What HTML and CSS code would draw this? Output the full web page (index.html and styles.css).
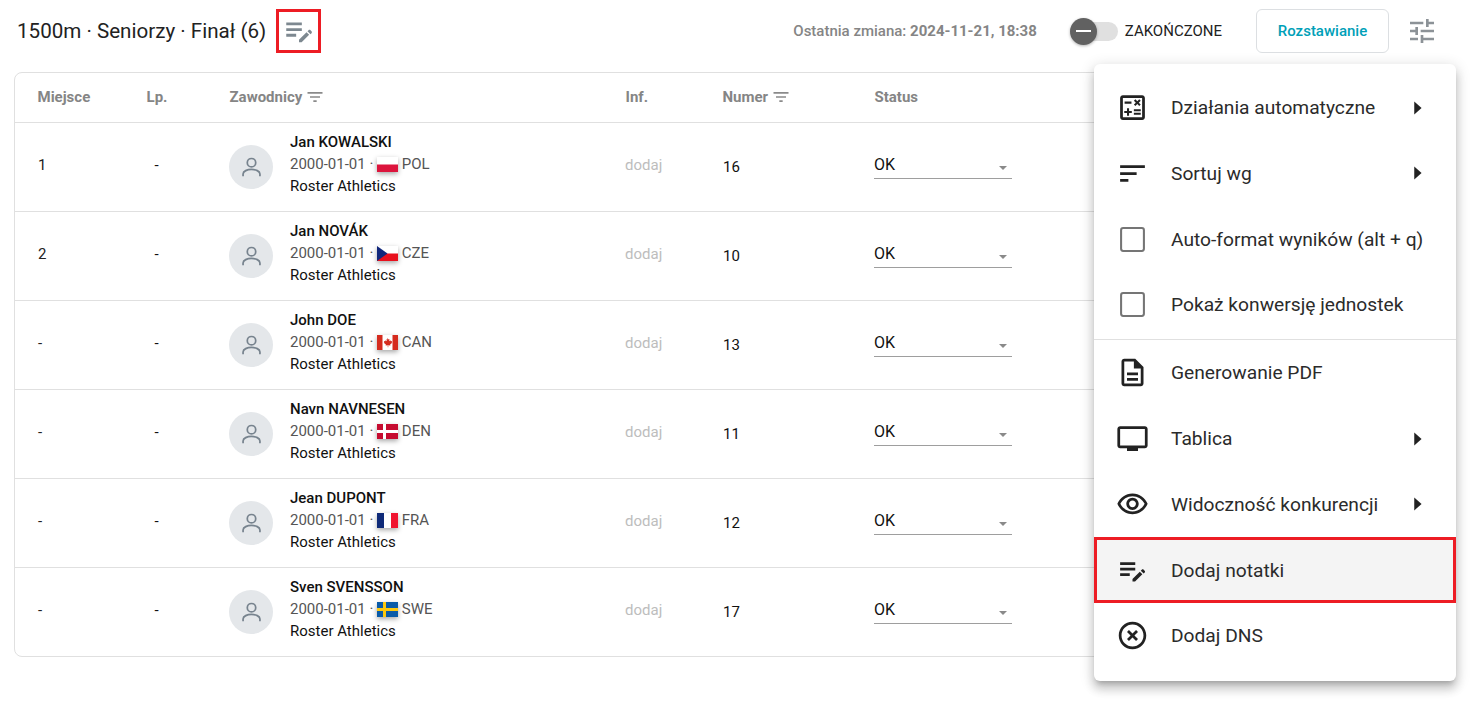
FILE: index.html
```html
<!DOCTYPE html>
<html>
<head>
   <meta charset="utf-8">
   <title>1500m - Seniorzy - Finał</title>
   <link rel="stylesheet" href="styles.css">
</head>
<body>
   <svg class="defs" width="0" height="0">
      <symbol id="i-note" viewBox="0 0 24 24"><path d="M3 10h11v2H3v-2zm0-2h11V6H3v2zm0 8h7v-2H3v2zm15.01-3.87.71-.71c.39-.39 1.02-.39 1.41 0l.71.71c.39.39.39 1.02 0 1.41l-.71.71-2.12-2.12zm-.71.71L12 18.14V20h1.86l5.3-5.3-1.86-1.86z"/></symbol>
      <symbol id="i-filter" viewBox="0 0 24 24"><path d="M10 18h4v-2h-4v2zM3 6v2h18V6H3zm3 7h12v-2H6v2z"/></symbol>
      <symbol id="i-caret" viewBox="0 0 24 24"><path d="M9 5l8 7-8 7z"/></symbol>
      <symbol id="i-box" viewBox="0 0 24 24"><rect x="3.7" y="3.7" width="16.6" height="16.6" rx="1.500" fill="none" stroke="#757575" stroke-width="1.500"/></symbol>
      <symbol id="i-person" viewBox="0 0 24 24"><circle cx="12" cy="7" r="4.4" fill="none" stroke="currentColor" stroke-width="1.8"/><path d="M3.2 21v-2.2c0-3 4.4-4.8 8.8-4.8s8.8 1.800 8.800 4.800V21" fill="none" stroke="currentColor" stroke-width="1.8"/></symbol>
   </svg>

   <header class="topbar">
      <h1 class="title">1500m · Seniorzy · Finał (6)</h1>
      <button class="note-btn" type="button"><svg class="note-icon"><use href="#i-note"/></svg></button>
      <div class="changed">Ostatnia zmiana: <b>2024-11-21, 18:38</b></div>
      <div class="toggle"><span class="thumb"></span></div>
      <span class="toggle-label">ZAKOŃCZONE</span>
      <button class="seat-btn" type="button">Rozstawianie</button>
      <svg class="tune" viewBox="0 0 24 24"><path d="M3 17v2h6v-2H3zM3 5v2h10V5H3zm10 16v-2h8v-2h-8v-2h-2v6h2zM7 9v2H3v2h4v2h2V9H7zm14 4v-2H11v2h10zm-6-4h2V7h4V5h-4V3h-2v6z"/></svg>
   </header>

   <section class="card">
      <div class="row head">
         <div>Miejsce</div>
         <div class="lp">Lp.</div>
         <div class="with-filter">Zawodnicy <svg class="filter"><use href="#i-filter"/></svg></div>
         <div>Inf.</div>
         <div class="with-filter">Numer <svg class="filter"><use href="#i-filter"/></svg></div>
         <div>Status</div>
      </div>

      <div class="row">
         <div class="place">1</div>
         <div class="lp">-</div>
         <div class="athlete">
            <div class="avatar"><svg><use href="#i-person"/></svg></div>
            <div class="info">
               <div class="name">Jan KOWALSKI</div>
               <div class="meta">2000-01-01 · <svg class="flag" viewBox="0 0 21 15"><rect width="21" height="15" fill="#fff"/><rect y="7.500" width="21" height="7.500" fill="#dc143c"/></svg> POL</div>
               <div>Roster Athletics</div>
            </div>
         </div>
         <div class="add">dodaj</div>
         <div class="num">16</div>
         <div class="status">OK<span class="arrow"></span></div>
      </div>

      <div class="row">
         <div class="place">2</div>
         <div class="lp">-</div>
         <div class="athlete">
            <div class="avatar"><svg><use href="#i-person"/></svg></div>
            <div class="info">
               <div class="name">Jan NOVÁK</div>
               <div class="meta">2000-01-01 · <svg class="flag" viewBox="0 0 21 15"><rect width="21" height="7.500" fill="#fff"/><rect y="7.500" width="21" height="7.500" fill="#e8101c"/><path d="M0 0l10.500 7.500L0 15z" fill="#11277b"/></svg> CZE</div>
               <div>Roster Athletics</div>
            </div>
         </div>
         <div class="add">dodaj</div>
         <div class="num">10</div>
         <div class="status">OK<span class="arrow"></span></div>
      </div>

      <div class="row">
         <div class="place">-</div>
         <div class="lp">-</div>
         <div class="athlete">
            <div class="avatar"><svg><use href="#i-person"/></svg></div>
            <div class="info">
               <div class="name">John DOE</div>
               <div class="meta">2000-01-01 · <svg class="flag" viewBox="0 0 21 15"><rect width="21" height="15" fill="#fff"/><rect width="5.500" height="15" fill="#d52b1e"/><rect x="15.500" width="5.500" height="15" fill="#d52b1e"/><path d="M10.500 2.800l1 1.800 1-.5-.4 2.200 1.300-1 .4.900 1.300-.2-.4 1.400.6.400-2.200 1.800.3.900-2.200-.3.100 2h-.6l.1-2-2.200.3.300-.9-2.200-1.800.6-.4-.4-1.400 1.300.2.400-.9 1.300 1-.4-2.200 1 .5z" fill="#d52b1e"/></svg> CAN</div>
               <div>Roster Athletics</div>
            </div>
         </div>
         <div class="add">dodaj</div>
         <div class="num">13</div>
         <div class="status">OK<span class="arrow"></span></div>
      </div>

      <div class="row">
         <div class="place">-</div>
         <div class="lp">-</div>
         <div class="athlete">
            <div class="avatar"><svg><use href="#i-person"/></svg></div>
            <div class="info">
               <div class="name">Navn NAVNESEN</div>
               <div class="meta">2000-01-01 · <svg class="flag" viewBox="0 0 21 15"><rect width="21" height="15" fill="#c60c30"/><rect x="6" width="3" height="15" fill="#fff"/><rect y="6" width="21" height="3" fill="#fff"/></svg> DEN</div>
               <div>Roster Athletics</div>
            </div>
         </div>
         <div class="add">dodaj</div>
         <div class="num">11</div>
         <div class="status">OK<span class="arrow"></span></div>
      </div>

      <div class="row">
         <div class="place">-</div>
         <div class="lp">-</div>
         <div class="athlete">
            <div class="avatar"><svg><use href="#i-person"/></svg></div>
            <div class="info">
               <div class="name">Jean DUPONT</div>
               <div class="meta">2000-01-01 · <svg class="flag" viewBox="0 0 21 15"><rect width="21" height="15" fill="#fff"/><rect width="7" height="15" fill="#0f2a78"/><rect x="14" width="7" height="15" fill="#f0142f"/></svg> FRA</div>
               <div>Roster Athletics</div>
            </div>
         </div>
         <div class="add">dodaj</div>
         <div class="num">12</div>
         <div class="status">OK<span class="arrow"></span></div>
      </div>

      <div class="row">
         <div class="place">-</div>
         <div class="lp">-</div>
         <div class="athlete">
            <div class="avatar"><svg><use href="#i-person"/></svg></div>
            <div class="info">
               <div class="name">Sven SVENSSON</div>
               <div class="meta">2000-01-01 · <svg class="flag" viewBox="0 0 21 15"><rect width="21" height="15" fill="#0a5ba8"/><rect x="6" width="3" height="15" fill="#fcc80e"/><rect y="6" width="21" height="3" fill="#fcc80e"/></svg> SWE</div>
               <div>Roster Athletics</div>
            </div>
         </div>
         <div class="add">dodaj</div>
         <div class="num">17</div>
         <div class="status">OK<span class="arrow"></span></div>
      </div>
   </section>

   <nav class="menu">
      <div class="item">
         <svg class="icon" viewBox="0 0 24 24"><path d="M19 3H5C3.900 3 3 3.900 3 5v14c0 1.100.9 2 2 2h14c1.100 0 2-.9 2-2V5C21 3.900 20.100 3 19 3zM19 19H5V5h14V19zM6.250 7.720h5v1.500h-5V7.720zM13 15.750h5v1.500h-5V15.750zM13 13.250h5v1.500h-5V13.250zM8 18h1.500v-2h2v-1.500h-2v-2H8v2H6V16h2V18zM14.090 10.950l1.410-1.410 1.410 1.410 1.060-1.060-1.410-1.420 1.410-1.410L16.910 6 15.500 7.410 14.090 6l-1.060 1.060 1.410 1.410-1.410 1.410L14.090 10.950z"/></svg>
         <span class="label">Działania automatyczne</span>
         <svg class="more"><use href="#i-caret"/></svg>
      </div>
      <div class="item">
         <svg class="icon" viewBox="0 0 24 24"><path d="M3 18h6v-2H3v2zM3 6v2h18V6H3zm0 7h12v-2H3v2z"/></svg>
         <span class="label">Sortuj wg</span>
         <svg class="more"><use href="#i-caret"/></svg>
      </div>
      <div class="item">
         <svg class="icon"><use href="#i-box"/></svg>
         <span class="label">Auto-format wyników (alt + q)</span>
      </div>
      <div class="item">
         <svg class="icon"><use href="#i-box"/></svg>
         <span class="label">Pokaż konwersję jednostek</span>
      </div>
      <div class="divider"></div>
      <div class="item">
         <svg class="icon" viewBox="0 0 24 24"><path d="M8 16h8v2H8zm0-4h8v2H8zm6-10H6c-1.100 0-2 .9-2 2v16c0 1.100.89 2 1.990 2H18c1.100 0 2-.9 2-2V8l-6-6zm4 18H6V4h7v5h5v11z"/></svg>
         <span class="label">Generowanie PDF</span>
      </div>
      <div class="item">
         <svg class="icon" viewBox="0 0 24 24"><path d="M21 3H3c-1.100 0-2 .9-2 2v12c0 1.100.9 2 2 2h5v2h8v-2h5c1.100 0 1.990-.9 1.990-2L23 5c0-1.100-.9-2-2-2zm0 14H3V5h18v12z"/></svg>
         <span class="label">Tablica</span>
         <svg class="more"><use href="#i-caret"/></svg>
      </div>
      <div class="item">
         <svg class="icon" viewBox="0 0 24 24"><path d="M12 6c3.790 0 7.170 2.130 8.820 5.500C19.170 14.870 15.790 17 12 17s-7.170-2.130-8.820-5.500C4.830 8.130 8.210 6 12 6m0-2C7 4 2.730 7.110 1 11.500 2.730 15.890 7 19 12 19s9.270-3.110 11-7.500C21.270 7.110 17 4 12 4zm0 5c1.380 0 2.500 1.120 2.500 2.500S13.380 14 12 14s-2.500-1.120-2.500-2.500S10.620 9 12 9m0-2c-2.480 0-4.500 2.020-4.500 4.500S9.520 16 12 16s4.500-2.020 4.500-4.500S14.480 7 12 7z"/></svg>
         <span class="label">Widoczność konkurencji</span>
         <svg class="more"><use href="#i-caret"/></svg>
      </div>
      <div class="item active">
         <svg class="icon"><use href="#i-note"/></svg>
         <span class="label">Dodaj notatki</span>
      </div>
      <div class="item">
         <svg class="icon" viewBox="0 0 24 24"><path d="M14.590 8L12 10.590 9.410 8 8 9.410 10.590 12 8 14.590 9.410 16 12 13.410 14.590 16 16 14.590 13.410 12 16 9.410 14.590 8zM12 2C6.470 2 2 6.470 2 12s4.470 10 10 10 10-4.470 10-10S17.530 2 12 2zm0 18c-4.410 0-8-3.590-8-8s3.590-8 8-8 8 3.590 8 8-3.590 8-8 8z"/></svg>
         <span class="label">Dodaj DNS</span>
      </div>
   </nav>
</body>
</html>
```

FILE: styles.css
```css
* {
   box-sizing: border-box;
}

body {
   margin: 0;
   height: 709px;
   overflow: hidden;
   background: #fff;
   color: #111;
   font-family: Roboto, "Liberation Sans", sans-serif;
   font-size: 15px;
}

.defs {
   position: absolute;
}

/* top bar */
.topbar {
   display: flex;
   align-items: center;
   height: 62px;
   padding: 0 42px 0 17px;
}

.title {
   margin: 0;
   font-size: 20.6px;
   font-weight: 400;
   color: #222;
}

.note-btn {
   width: 45px;
   height: 44px;
   margin-left: 10px;
   padding: 0;
   display: flex;
   align-items: center;
   justify-content: center;
   background: none;
   border: 3px solid #ed1c24;
}

.note-icon {
   width: 34px;
   height: 34px;
   fill: #7d8890;
}

.changed {
   margin-left: auto;
   color: #858585;
   font-weight: 500;
}

.changed b {
   font-weight: 700;
}

.toggle {
   position: relative;
   width: 46px;
   height: 19px;
   margin-left: 35px;
   background: #e0e0e0;
   border-radius: 10px;
}

.thumb {
   position: absolute;
   left: -2px;
   top: -4px;
   width: 27px;
   height: 27px;
   background: #616161;
   border-radius: 50%;
   box-shadow: 0 1px 3px rgba(0, 0, 0, .3);
}

.thumb::after {
   content: "";
   position: absolute;
   left: 6px;
   top: 12px;
   width: 15px;
   height: 2px;
   background: #fff;
}

.toggle-label {
   margin-left: 7px;
   color: #222;
}

.seat-btn {
   width: 133px;
   height: 44px;
   margin-left: 34px;
   background: #fff;
   border: 1px solid #dcdfe2;
   border-radius: 6px;
   color: #00a0b8;
   font-family: inherit;
   font-size: 15px;
   font-weight: 500;
}

.tune {
   width: 32px;
   height: 32px;
   margin-left: 17px;
   fill: #8c9297;
}

/* table, its right end lies under the menu */
.card {
   margin: 10px 40px 0 14px;
   height: 585px;
   border: 1px solid #e0e0e0;
   border-radius: 8px;
}

.row {
   display: grid;
   grid-template-columns: 109px 83px 396px 97px 152px 138px;
   align-items: center;
   height: 89px;
   padding-left: 22px;
   border-bottom: 1px solid #e0e0e0;
}

.row:last-child {
   border-bottom-color: transparent;
}

.row.head {
   height: 50px;
   padding-bottom: 2px;
   padding-left: 22.5px;
   color: #858585;
   font-weight: 700;
}

.lp {
   width: 21px;
   margin-top: -4px;
   text-align: center;
   white-space: nowrap;
}

.head .lp {
   margin-top: 0;
}

.with-filter {
   display: flex;
   align-items: center;
   gap: 3px;
}

.filter {
   width: 20px;
   height: 20px;
   fill: #8a8a8a;
}

.place {
   margin-top: -5px;
   padding-left: 1px;
   color: #222;
}

.athlete {
   display: flex;
   align-items: center;
}

.avatar {
   display: flex;
   align-items: center;
   justify-content: center;
   width: 44px;
   height: 44px;
   margin-right: 17px;
   background: #e4e7ea;
   border-radius: 50%;
   color: #77838e;
}

.avatar svg {
   width: 23px;
   height: 23px;
}

.info {
   margin-top: -6px;
   line-height: 22px;
}

.name {
   font-weight: 500;
}

.meta {
   color: #555;
}

.flag {
   width: 21px;
   height: 15px;
   vertical-align: -3px;
   box-shadow: 0 2px 5px rgba(0, 0, 0, .35);
}

.add {
   margin-top: -4px;
   color: #bdbdbd;
}

.num {
   padding-left: 1px;
}

.status {
   position: relative;
   height: 27px;
   margin-top: -3px;
   font-size: 16px;
   line-height: 26px;
   border-bottom: 1px solid #9e9e9e;
}

.arrow {
   position: absolute;
   right: 5px;
   top: 14px;
   border-top: 4px solid #8a8a8a;
   border-left: 4px solid transparent;
   border-right: 4px solid transparent;
}

/* popup menu */
.menu {
   position: absolute;
   left: 1094px;
   top: 64px;
   width: 362px;
   height: 617px;
   padding: 10.7px 0;
   background: #fff;
   border-radius: 6px;
   box-shadow: 0 5px 5px -3px rgba(0, 0, 0, .2), 0 8px 10px 1px rgba(0, 0, 0, .14), 0 3px 14px 2px rgba(0, 0, 0, .12);
}

.item {
   display: flex;
   align-items: center;
   height: 65.8px;
   padding-left: 22px;
   color: #2b2b2b;
   font-size: 19.2px;
}

.icon {
   flex: none;
   width: 33px;
   height: 33px;
   fill: #222;
}

.label {
   margin-left: 22px;
}

.more {
   width: 22px;
   height: 22px;
   margin-left: auto;
   margin-right: 28px;
   fill: #222;
}

.divider {
   height: 1px;
   margin-top: 1px;
   background: #e0e0e0;
}

.item.active {
   padding-left: 19px;
   background: #f4f4f4;
   border: 3px solid #ed1c24;
}
```
